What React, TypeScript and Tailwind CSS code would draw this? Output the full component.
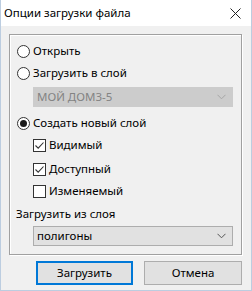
import React from "react";

const font = { fontFamily: '"Noto Sans", "Open Sans", sans-serif' };

function Radio({ label, checked }: { label: string; checked?: boolean }) {
  return (
    <div className="flex h-[20px] items-center pl-[7px]">
      <span className="flex h-[13px] w-[13px] items-center justify-center rounded-full border border-[#333] bg-white">
        {checked && <span className="h-[7px] w-[7px] rounded-full bg-[#1a1a1a]" />}
      </span>
      <span className="ml-[3px] text-[11.5px] leading-none text-black">{label}</span>
    </div>
  );
}

function Check({ label, checked }: { label: string; checked?: boolean }) {
  return (
    <div className="flex h-[20px] items-center pl-[23px]">
      <span className="flex h-[13px] w-[13px] items-center justify-center border border-[#333] bg-white">
        {checked && (
          <svg width="11" height="11" viewBox="0 0 11 11">
            <path d="M1.5 5.5 L4.2 8.2 L9.5 2.5" fill="none" stroke="#333" strokeWidth="1.1" />
          </svg>
        )}
      </span>
      <span className="ml-[3px] text-[11.5px] leading-none text-black">{label}</span>
    </div>
  );
}

function Select({ value, disabled }: { value: string; disabled?: boolean }) {
  return (
    <div
      className={`ml-[23px] flex h-[20px] w-[200px] items-center justify-between border px-[3px] text-[11.5px] ${
        disabled ? "border-[#cccccc] bg-[#cccccc] text-[#838383]" : "border-[#adadad] bg-[#e1e1e1] text-black"
      }`}
    >
      <span className="leading-none">{value}</span>
      <svg width="9" height="6" viewBox="0 0 9 6" className="mr-[3px]">
        <path d="M0.5 0.8 L4.5 4.8 L8.5 0.8" fill="none" stroke={disabled ? "#a6a6a6" : "#555"} strokeWidth="1" />
      </svg>
    </div>
  );
}

export default function App() {
  return (
    <div className="flex h-[291px] w-[252px] flex-col border-x border-b border-[#bccde0] bg-[#f0f0f0]" style={font}>
      <div className="flex h-[26px] items-center justify-between bg-white pl-[3px] pr-[10px]">
        <span className="text-[11.5px] text-black">Опции загрузки файла</span>
        <svg width="11" height="11" viewBox="0 0 11 11">
          <path d="M0.5 0.5 L10.5 10.5 M10.5 0.5 L0.5 10.5" stroke="#222" strokeWidth="1" />
        </svg>
      </div>

      <div className="ml-[8px] mt-[8px] flex h-[221px] w-[233px] flex-col border border-[#a0a0a0] shadow-[inset_1px_1px_0_#ffffff,1px_1px_0_#ffffff]">
        <div className="mt-[6px]">
          <Radio label="Открыть" />
        </div>
        <div className="mt-[2px]">
          <Radio label="Загрузить в слой" />
        </div>
        <div className="mt-[4px]">
          <Select value="МОЙ ДОМ3-5" disabled />
        </div>
        <div className="mt-[6px]">
          <Radio label="Создать новый слой" checked />
        </div>
        <div className="mt-[2px]">
          <Check label="Видимый" checked />
        </div>
        <div className="mt-[4px]">
          <Check label="Доступный" checked />
        </div>
        <div className="mt-[2px]">
          <Check label="Изменяемый" />
        </div>
        <div className="mt-[3px] flex h-[20px] items-center pl-[6px] text-[11.5px] text-black">
          Загрузить из слоя
        </div>
        <div className="mt-[2px]">
          <Select value="полигоны" />
        </div>
      </div>

      <div className="ml-[35px] mt-[6px] flex gap-[11px]">
        <button className="flex h-[24px] w-[97px] items-center justify-center border-2 border-[#0078d7] bg-[#e1e1e1] text-[11.5px] text-black">
          Загрузить
        </button>
        <button className="flex h-[24px] w-[98px] items-center justify-center border border-[#adadad] bg-[#e1e1e1] text-[11.5px] text-black">
          Отмена
        </button>
      </div>
    </div>
  );
}
